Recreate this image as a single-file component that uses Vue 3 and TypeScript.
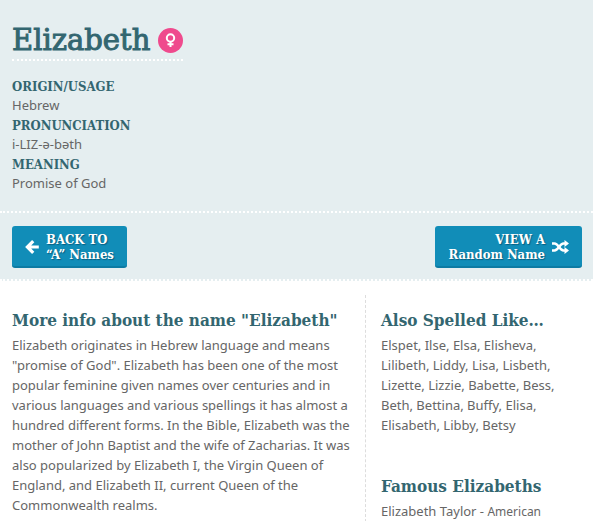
<script setup lang="ts">
interface Fact {
  label: string
  value: string
}

const facts: Fact[] = [
  { label: 'ORIGIN/USAGE', value: 'Hebrew' },
  { label: 'PRONUNCIATION', value: 'i-LIZ-ə-bəth' },
  { label: 'MEANING', value: 'Promise of God' },
]

const spellings: string[] = [
  'Elspet', 'Ilse', 'Elsa', 'Elisheva', 'Lilibeth', 'Liddy', 'Lisa', 'Lisbeth',
  'Lizette', 'Lizzie', 'Babette', 'Bess', 'Beth', 'Bettina', 'Buffy', 'Elisa',
  'Elisabeth', 'Libby', 'Betsy',
]
</script>

<template>
  <div class="page">
    <header class="intro">
      <h1 class="title">
        <span>Elizabeth</span>
        <svg class="gender" viewBox="0 0 25 25" role="img" aria-label="Female">
          <circle cx="12.5" cy="12.5" r="12.5" fill="#ef4a8d" />
          <g fill="none" stroke="#fff" stroke-width="2">
            <circle cx="12.5" cy="10" r="3.7" />
            <path d="M12.5 13.7V19M9.5 16.3h6" />
          </g>
        </svg>
      </h1>
      <dl class="facts">
        <template v-for="fact in facts" :key="fact.label">
          <dt>{{ fact.label }}</dt>
          <dd>{{ fact.value }}</dd>
        </template>
      </dl>
    </header>

    <nav class="actions">
      <a class="btn" href="#names-a">
        <svg class="arrow" viewBox="0 0 14 14" aria-hidden="true">
          <path d="M8.2 1.2 2.4 7l5.8 5.800M3 7h10.8" fill="none" stroke="#fff" stroke-width="3.2" />
        </svg>
        <span>BACK TO<br />“A” Names</span>
      </a>
      <a class="btn next" href="#random">
        <span>VIEW A<br />Random Name</span>
        <svg class="shuffle" viewBox="0 0 17 14" aria-hidden="true">
          <g fill="none" stroke="#fff" stroke-width="2.4">
            <path d="M0 3.5h2.5C6.5 3.5 7.5 10.5 11.5 10.5H13.5" />
            <path d="M0 10.5h2.5C6.5 10.5 7.5 3.5 11.5 3.5H13.5" />
          </g>
          <path d="M12.5 0 17 3.5 12.5 7zM12.5 7 17 10.5 12.5 14z" fill="#fff" />
        </svg>
      </a>
    </nav>

    <main class="content">
      <article class="info">
        <h2>More info about the name "Elizabeth"</h2>
        <p>
          Elizabeth originates in Hebrew language and means "promise of God". Elizabeth has been
          one of the most popular feminine given names over centuries and in various languages and
          various spellings it has almost a hundred different forms. In the Bible, Elizabeth was
          the mother of John Baptist and the wife of Zacharias. It was also popularized by
          Elizabeth I, the Virgin Queen of England, and Elizabeth II, current Queen of the
          Commonwealth realms.
        </p>
      </article>
      <aside class="related">
        <section>
          <h2>Also Spelled Like…</h2>
          <p>{{ spellings.join(', ') }}</p>
        </section>
        <section>
          <h2>Famous Elizabeths</h2>
          <p>Elizabeth Taylor - <small>American</small></p>
        </section>
      </aside>
    </main>
  </div>
</template>

<style>
body {
  margin: 0;
  background: #fff;
}
</style>

<style scoped>
.page {
  color: #666;
  font-family: "Noto Sans", "Open Sans", sans-serif;
  font-size: 13px;
  line-height: 20px;
}

h1,
h2,
p,
dl,
dd {
  margin: 0;
}

h2,
dt,
.btn {
  font-family: "DejaVu Serif Condensed", "DejaVu Serif", serif;
}

h1,
h2,
dt {
  color: #336670;
}

.intro {
  padding: 22px 12px 16px;
  background: #e5eef0;
}

.title {
  display: inline-flex;
  align-items: center;
  gap: 8px;
  border-bottom: 2px dotted #fff;
  font-family: "DejaVu Serif", serif;
  font-size: 29px;
  font-weight: 400;
  line-height: 37px;
  -webkit-text-stroke: 1px #336670;
}

.gender {
  width: 25px;
  height: 25px;
}

.facts {
  margin-top: 17px;
}

dt {
  font-size: 13px;
  font-weight: 700;
  line-height: 17px;
}

dd {
  margin-bottom: 2px;
}

.actions {
  display: flex;
  justify-content: space-between;
  padding: 13px 11px 11px 12px;
  border-top: 2px dotted #fff;
  border-bottom: 2px dotted #fff;
  background: #e5eef0;
}

.btn {
  display: flex;
  align-items: center;
  gap: 7px;
  padding: 6px 13px 4px;
  border-bottom: 2px solid #0d7ba3;
  border-radius: 3px;
  background: #118db8;
  color: #fff;
  font-size: 13px;
  font-weight: 700;
  line-height: 15px;
  text-decoration: none;
  text-shadow: 1px 1px 1px #0a5f80;
}

.next {
  text-align: right;
}

.arrow {
  width: 14px;
  height: 14px;
}

.shuffle {
  width: 17px;
  height: 14px;
}

.content {
  display: grid;
  grid-template-columns: minmax(0, 365fr) minmax(0, 228fr);
  padding-top: 14px;
}

.info {
  padding: 13px 12px 0;
}

.related {
  padding: 13px 12px 0 15px;
  border-left: 1px dashed #ddd;
}

.related section + section {
  margin-top: 39px;
}

h2 {
  margin-bottom: 2px;
  font-size: 17px;
  font-weight: 700;
  line-height: 25px;
}

small {
  font-size: 12px;
}
</style>
